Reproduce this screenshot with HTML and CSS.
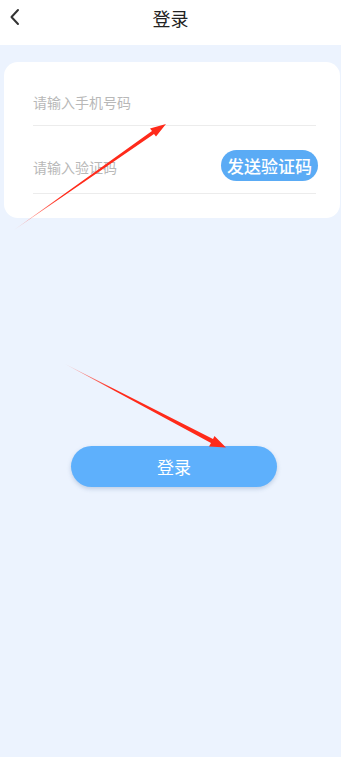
FILE: index.html
```html
<!DOCTYPE html>
<html lang="zh">
<head>
<meta charset="utf-8">
<link rel="stylesheet" href="styles.css">
</head>
<body>
<div class="page">
  <header class="topbar">
    <svg class="back" width="12" height="18" viewBox="0 0 12 18"><path d="M9 2 L2.5 9 L9 16" fill="none" stroke="#333" stroke-width="2" stroke-linecap="round" stroke-linejoin="round"/></svg>
    <div class="title">登录</div>
  </header>
  <main class="content">
    <section class="card">
      <div class="row row-phone">
        <span class="placeholder">请输入手机号码</span>
      </div>
      <div class="row row-code">
        <span class="placeholder">请输入验证码</span>
        <button class="send">发送验证码</button>
      </div>
    </section>
    <div class="login-wrap">
      <button class="login">登录</button>
    </div>
  </main>
  <svg class="arrows" width="341" height="757" viewBox="0 0 341 757">
    <defs>
      <linearGradient id="g1" x1="15" y1="229" x2="165" y2="124" gradientUnits="userSpaceOnUse">
        <stop offset="0" stop-color="#ff2a1a" stop-opacity="0.25"/>
        <stop offset="0.3" stop-color="#ff2a1a"/>
      </linearGradient>
      <linearGradient id="g2" x1="66" y1="365" x2="225" y2="447" gradientUnits="userSpaceOnUse">
        <stop offset="0" stop-color="#ff2a1a" stop-opacity="0.25"/>
        <stop offset="0.3" stop-color="#ff2a1a"/>
      </linearGradient>
    </defs>
    <polygon points="14,230 152,131 150,128.5 166,124 156,136.5 154,134" fill="url(#g1)"/>
    <polygon points="65,364 213,439 214.5,436 226,447.5 209,446.5 211,443" fill="url(#g2)"/>
  </svg>
</div>
</body>
</html>
```
FILE: styles.css
```css
* { box-sizing: border-box; }
html, body { margin: 0; padding: 0; }
body {
  font-family: "Noto Sans CJK SC", "Noto Sans", sans-serif;
  background: #ecf3fe;
}
.page {
  position: relative;
  width: 341px;
  height: 757px;
  overflow: hidden;
  background: #ecf3fe;
}
.topbar {
  position: relative;
  height: 45px;
  background: #ffffff;
  display: flex;
  justify-content: center;
}
.back {
  position: absolute;
  left: 9px;
  top: 8px;
}
.title {
  font-size: 18px;
  line-height: 20px;
  color: #222;
  margin-top: 8px;
}
.content {
  padding: 17px 0 0 4px;
}
.card {
  width: 336px;
  height: 156px;
  background: #fff;
  border-radius: 14px;
  padding: 0 24px 0 29px;
  display: flex;
  flex-direction: column;
}
.row {
  border-bottom: 1px solid #ececec;
  display: flex;
  align-items: center;
  justify-content: space-between;
}
.row-phone {
  height: 64px;
  padding-top: 16px;
}
.row-code {
  height: 68px;
  padding-top: 14px;
}
.placeholder {
  font-size: 14px;
  line-height: 20px;
  color: #b8b8b8;
}
.send {
  border: none;
  background: #5aabf5;
  color: #fff;
  font-family: inherit;
  font-size: 17px;
  font-weight: 500;
  height: 31px;
  padding: 0 6px;
  border-radius: 16px;
  margin-right: -2px;
  margin-top: -2px;
  line-height: 31px;
}
.login-wrap {
  padding: 228px 0 0 67px;
}
.login {
  width: 206px;
  height: 41px;
  border: none;
  border-radius: 21px;
  background: #5eb0fc;
  color: #fff;
  font-family: inherit;
  font-size: 17px;
  box-shadow: 0 2px 4px rgba(60, 100, 150, 0.25);
}
.arrows {
  position: absolute;
  left: 0;
  top: 0;
  pointer-events: none;
}
```
